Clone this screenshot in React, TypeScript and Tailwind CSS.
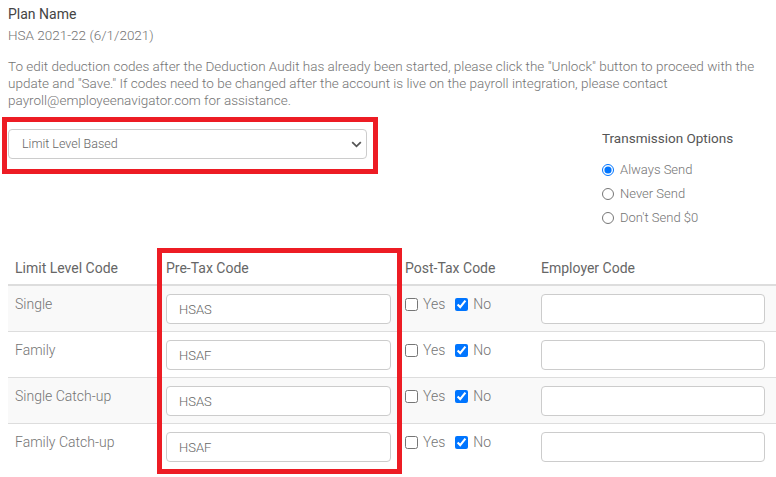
import { useState } from "react";

type Row = { label: string; preTax: string };

const ROWS: Row[] = [
    { label: "Single", preTax: "HSAS" },
    { label: "Family", preTax: "HSAF" },
    { label: "Single Catch-up", preTax: "HSAS" },
    { label: "Family Catch-up", preTax: "HSAF" },
];

function Chevron() {
    return (
        <svg width="11" height="7" viewBox="0 0 11 7" className="pointer-events-none absolute right-[5px] top-[12px]">
            <path d="M1.2 1.2 L5.5 5.3 L9.8 1.2" fill="none" stroke="#555" strokeWidth="1.8" />
        </svg>
    );
}

export default function App() {
    const [transmission, setTransmission] = useState("always");

    return (
        <div className="relative h-[477px] w-[776px] overflow-hidden bg-white font-['Roboto','Liberation_Sans',sans-serif] font-light text-[#747474]">
            <div className="pl-2 pt-[5px]">
                <div className="text-[14px] leading-[18px] font-normal text-[#444]">Plan Name</div>
                <div className="mt-[3px] text-[13.5px] leading-[18px]">HSA 2021-22 (6/1/2021)</div>
                <p className="mt-[14px] w-[752px] text-[13.5px] leading-[17px]">
                    To edit deduction codes after the Deduction Audit has already been started, please click the "Unlock" button to proceed with the update and "Save." If codes need to be changed after the account is live on the payroll integration, please contact payroll@employeenavigator.com for assistance.
                </p>

                <div className="mt-[20px] flex items-start">
                    <div className="relative w-[359px]">
                        <select
                            defaultValue="limit"
                            className="h-[30px] w-full appearance-none rounded-[4px] border border-[#ccc] bg-white pl-[13px] text-[12.5px] font-light text-[#666] outline-none"
                        >
                            <option value="limit">Limit Level Based</option>
                            <option value="plan">Plan Based</option>
                        </select>
                        <Chevron />
                    </div>

                    <div className="ml-[235px]">
                        <div className="text-[13.5px] leading-[18px] font-normal text-[#555]">Transmission Options</div>
                        <div className="mt-[11px] flex flex-col">
                            {[
                                { v: "always", t: "Always Send" },
                                { v: "never", t: "Never Send" },
                                { v: "zero", t: "Don't Send $0" },
                            ].map((o) => (
                                <label key={o.v} className="flex h-[24px] items-center text-[13px]">
                                    <input
                                        type="radio"
                                        name="transmission"
                                        checked={transmission === o.v}
                                        onChange={() => setTransmission(o.v)}
                                        className="m-0 h-[12px] w-[12px]"
                                    />
                                    <span className="ml-[6px]">{o.t}</span>
                                </label>
                            ))}
                        </div>
                    </div>
                </div>

                <table className="mt-[20px] w-[768px] table-fixed border-collapse text-[14px]">
                    <colgroup>
                        <col className="w-[150px]" />
                        <col className="w-[241px]" />
                        <col className="w-[134px]" />
                        <col className="w-[243px]" />
                    </colgroup>
                    <thead>
                        <tr className="border-b-2 border-[#ddd] text-left">
                            <th className="px-[7px] pt-[8px] pb-[6px] leading-[20px] font-normal text-[#666]">Limit Level Code</th>
                            <th className="px-[8px] pt-[8px] pb-[6px] leading-[20px] font-normal text-[#666]">Pre-Tax Code</th>
                            <th className="px-[6px] pt-[8px] pb-[6px] leading-[20px] font-normal text-[#666]">Post-Tax Code</th>
                            <th className="pl-[8px] pr-[11px] pt-[8px] pb-[6px] leading-[20px] font-normal text-[#666]">Employer Code</th>
                        </tr>
                    </thead>
                    <tbody>
                        {ROWS.map((r, i) => (
                            <tr key={i} className={`border-t border-[#ddd] ${i % 2 === 0 ? "bg-[#f9f9f9]" : "bg-white"}`}>
                                <td className="px-[7px] pt-[8px] pb-[7px] align-top leading-[20px]">{r.label}</td>
                                <td className="px-[8px] pt-[8px] pb-[7px] align-top">
                                    <input
                                        defaultValue={r.preTax}
                                        className="h-[30px] w-full rounded-[4px] border border-[#ccc] bg-white pl-[12px] text-[13px] font-light text-[#666] outline-none"
                                    />
                                </td>
                                <td className="px-[6px] pt-[8px] pb-[7px] align-top">
                                    <div className="flex h-[20px] items-center text-[14px]">
                                        <input type="checkbox" className="m-0 h-[13px] w-[13px]" />
                                        <span className="ml-[5px]">Yes</span>
                                        <input type="checkbox" defaultChecked className="m-0 ml-[10px] h-[13px] w-[13px]" />
                                        <span className="ml-[5px]">No</span>
                                    </div>
                                </td>
                                <td className="pl-[8px] pr-[11px] pt-[8px] pb-[7px] align-top">
                                    <input className="h-[30px] w-full rounded-[4px] border border-[#ccc] bg-white outline-none" />
                                </td>
                            </tr>
                        ))}
                    </tbody>
                </table>
            </div>

            {/* annotation boxes */}
            <div className="pointer-events-none absolute left-[2px] top-[117px] h-[57px] w-[376px] border-[5px] border-[#ed1c24]" />
            <div className="pointer-events-none absolute left-[157px] top-[248px] h-[226px] w-[245px] border-[5px] border-[#ed1c24]" />
        </div>
    );
}
